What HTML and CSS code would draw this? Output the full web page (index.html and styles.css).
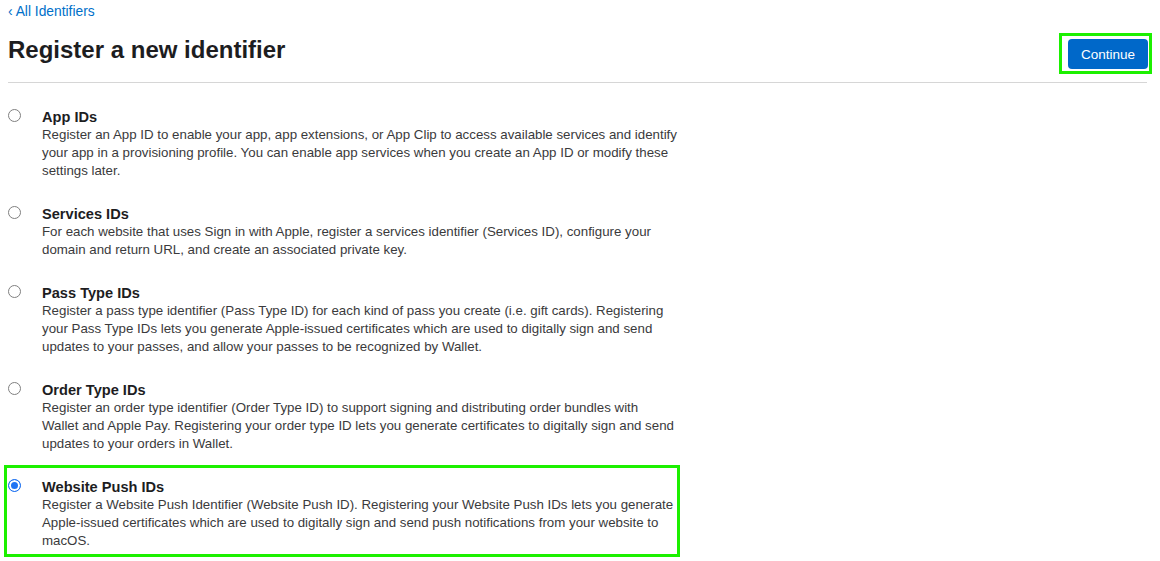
FILE: index.html
```html
<!DOCTYPE html>
<html>
<head>
<meta charset="utf-8">
<link rel="stylesheet" href="styles.css">
</head>
<body>
<div class="page">
  <a class="back" href="#">‹ All Identifiers</a>
  <div class="head">
    <h1 class="title">Register a new identifier</h1>
    <div class="btn-wrap"><button class="btn">Continue</button></div>
  </div>
  <div class="list">
    <label class="item">
      <span class="radio"></span>
      <span class="body">
        <span class="name">App IDs</span>
        <span class="desc">Register an App ID to enable your app, app extensions, or App Clip to access available services and identify your app in a provisioning profile. You can enable app services when you create an App ID or modify these settings later.</span>
      </span>
    </label>
    <label class="item">
      <span class="radio"></span>
      <span class="body">
        <span class="name">Services IDs</span>
        <span class="desc">For each website that uses Sign in with Apple, register a services identifier (Services ID), configure your domain and return URL, and create an associated private key.</span>
      </span>
    </label>
    <label class="item">
      <span class="radio"></span>
      <span class="body">
        <span class="name">Pass Type IDs</span>
        <span class="desc">Register a pass type identifier (Pass Type ID) for each kind of pass you create (i.e. gift cards). Registering your Pass Type IDs lets you generate Apple-issued certificates which are used to digitally sign and send updates to your passes, and allow your passes to be recognized by Wallet.</span>
      </span>
    </label>
    <label class="item">
      <span class="radio"></span>
      <span class="body">
        <span class="name">Order Type IDs</span>
        <span class="desc">Register an order type identifier (Order Type ID) to support signing and distributing order bundles with Wallet and Apple Pay. Registering your order type ID lets you generate certificates to digitally sign and send updates to your orders in Wallet.</span>
      </span>
    </label>
    <label class="item selected">
      <span class="radio checked"></span>
      <span class="body">
        <span class="name">Website Push IDs</span>
        <span class="desc">Register a Website Push Identifier (Website Push ID). Registering your Website Push IDs lets you generate Apple-issued certificates which are used to digitally sign and send push notifications from your website to macOS.</span>
      </span>
    </label>
  </div>
</div>
</body>
</html>
```
FILE: styles.css
```css
html, body {
  margin: 0;
  padding: 0;
  background: #fff;
}
body {
  font-family: "Liberation Sans", Arial, sans-serif;
  color: #1d1d1f;
}
.page {
  padding: 3px 13px 0 8px;
}
.back {
  display: block;
  font-size: 13.8px;
  line-height: 18px;
  color: #0070c9;
  text-decoration: none;
}
.head {
  display: flex;
  justify-content: space-between;
  align-items: flex-start;
  padding-top: 12px;
  padding-bottom: 8px;
  border-bottom: 1px solid #d6d6d6;
}
.title {
  margin: 3px 0 0 0;
  font-size: 24px;
  line-height: 28px;
  font-weight: bold;
  color: #1d1d1f;
}
.btn-wrap {
  border: 3px solid #1cf000;
  padding: 3px 1px 2px 6px;
  margin-right: -5px;
}
.btn {
  display: block;
  height: 30px;
  width: 80px;
  border: none;
  border-radius: 4px;
  background: #0068c9;
  color: #fff;
  font-family: inherit;
  font-size: 13.5px;
  padding: 0;
}
.list {
  display: flex;
  flex-direction: column;
  gap: 5px;
  margin-top: 12px;
  margin-left: -4px;
}
.item {
  display: flex;
  width: 676px;
  box-sizing: border-box;
  border: 3px solid transparent;
  padding: 10px 4px 4px 1px;
}
.item.selected {
  border-color: #1cf000;
}
.radio {
  flex: none;
  box-sizing: border-box;
  width: 13px;
  height: 13px;
  margin-top: 1px;
  margin-right: 21px;
  border: 1px solid #808080;
  border-radius: 50%;
  background: #fff;
}
.radio.checked {
  border-color: #1a6ff0;
  background: #1f74f4;
  box-shadow: inset 0 0 0 2px #fff;
}
.body {
  flex: none;
  width: 636px;
  display: flex;
  flex-direction: column;
}
.name {
  font-size: 14.6px;
  line-height: 18px;
  font-weight: bold;
  color: #1d1d1f;
}
.desc {
  font-size: 13.3px;
  line-height: 18px;
  color: #3a3a3c;
}
```
